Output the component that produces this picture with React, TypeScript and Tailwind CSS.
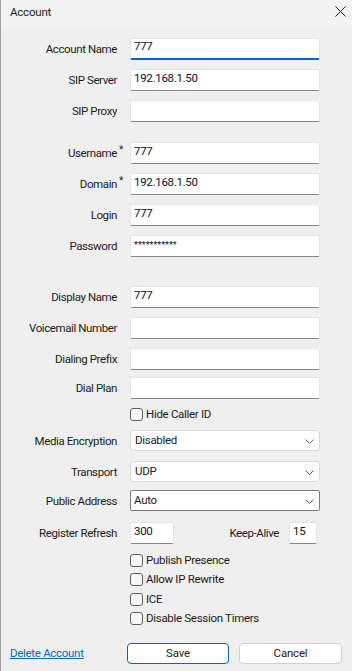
import React from "react";

const font = { fontFamily: 'Roboto, "Liberation Sans", sans-serif' };

function Field({ label, value, star, mt, focused, password }: { label: string; value?: string; star?: boolean; mt: string; focused?: boolean; password?: boolean }) {
  return (
    <div className={`flex items-center ${mt}`}>
      <div className="w-[116px] text-right text-[11.5px] tracking-[-0.4px] text-[#1b1b1b] leading-none pt-[2px]">
        <span className="relative">
          {label}
          {star && <span className="absolute left-full top-[-1px] ml-[2px] text-[10px]">*</span>}
        </span>
      </div>
      <div
        className={`ml-[13px] w-[190px] h-[22px] bg-white rounded-[2px] border border-[#e5e5e5] ${focused ? "border-b-2 border-b-[#0067c0]" : "border-b-[#868686]"} flex items-center pl-[3px] pb-[3px] text-[11.5px] tracking-[-0.3px] text-[#101020]`}
      >
        {password ? <span className="text-[9px] tracking-[0px] pt-[2px]">***********</span> : value}
      </div>
    </div>
  );
}

function Select({ label, value, mt, dark }: { label: string; value: string; mt: string; dark?: boolean }) {
  return (
    <div className={`flex items-center ${mt}`}>
      <div className="w-[116px] text-right text-[11.5px] tracking-[-0.4px] text-[#1b1b1b] leading-none pt-[2px]">{label}</div>
      <div
        className={`ml-[13px] w-[190px] h-[21px] bg-white border ${dark ? "border-[#7a7a7a] rounded-[2px] pl-[3px]" : "border-[#d9d9d9] rounded-[3px] pl-[4px]"} flex items-center justify-between pr-[5px] text-[11.5px] tracking-[-0.3px] text-[#1b1b1b]`}
      >
        <span>{value}</span>
        <svg width="9" height="5" viewBox="0 0 9 5" className="mt-[1px]">
          <path d="M0.5 0.5 L4.5 4.5 L8.5 0.5" fill="none" stroke="#5a5a5a" strokeWidth="1" />
        </svg>
      </div>
    </div>
  );
}

function Check({ label, mt }: { label: string; mt: string }) {
  return (
    <div className={`flex items-center h-[13px] ${mt}`}>
      <div className="ml-[129px] w-[13px] h-[13px] rounded-[3px] border border-[#5f5f5f] bg-[#f6f6f6]" />
      <span className="ml-[3px] pt-[1px] text-[11.5px] tracking-[-0.3px] text-[#1b1b1b] leading-none">{label}</span>
    </div>
  );
}

export default function App() {
  return (
    <div className="w-[352px] h-[671px] overflow-hidden border-l border-[#a3a3a3] bg-[#efefef] flex flex-col" style={font}>
      <div className="h-[27px] bg-[#f3f3f3] flex items-center justify-between pl-[9px] pr-[6px] shrink-0">
        <span className="text-[11.5px] tracking-[-0.2px] text-[#1b1b1b] -mt-[2px]">Account</span>
        <svg width="11" height="11" viewBox="0 0 11 11" className="-mt-[4px]">
          <path d="M0.5 0.5 L10.5 10.5 M10.5 0.5 L0.5 10.5" stroke="#1b1b1b" strokeWidth="1" />
        </svg>
      </div>
      <div className="flex flex-col">
        <Field label="Account Name" value="777" mt="mt-[11px]" focused />
        <Field label="SIP Server" value="192.168.1.50" mt="mt-[9px]" />
        <Field label="SIP Proxy" mt="mt-[9px]" />
        <Field label="Username" value="777" star mt="mt-[20px]" />
        <Field label="Domain" value="192.168.1.50" star mt="mt-[9px]" />
        <Field label="Login" value="777" mt="mt-[9px]" />
        <Field label="Password" password mt="mt-[9px]" />
        <Field label="Display Name" value="777" mt="mt-[29px]" />
        <Field label="Voicemail Number" mt="mt-[9px]" />
        <Field label="Dialing Prefix" mt="mt-[9px]" />
        <Field label="Dial Plan" mt="mt-[7px]" />
        <Check label="Hide Caller ID" mt="mt-[9px]" />
        <Select label="Media Encryption" value="Disabled" mt="mt-[9px]" />
        <Select label="Transport" value="UDP" mt="mt-[10px]" />
        <Select label="Public Address" value="Auto" mt="mt-[8px]" dark />
        <div className="flex items-center mt-[11px]">
          <div className="w-[116px] text-right text-[11.5px] tracking-[-0.4px] text-[#1b1b1b] leading-none pt-[2px]">Register Refresh</div>
          <div className="ml-[13px] w-[44px] h-[22px] bg-white rounded-[2px] border border-[#e5e5e5] border-b-[#868686] flex items-center pl-[3px] pb-[3px] text-[11.5px] tracking-[-0.3px] text-[#101020]">300</div>
          <div className="w-[105px] text-right text-[11.5px] tracking-[-0.4px] text-[#1b1b1b] leading-none pt-[2px]">Keep-Alive</div>
          <div className="ml-[10px] w-[28px] h-[22px] bg-white rounded-[2px] border border-[#e5e5e5] border-b-[#868686] flex items-center pl-[3px] pb-[3px] text-[11.5px] tracking-[-0.3px] text-[#101020]">15</div>
        </div>
        <Check label="Publish Presence" mt="mt-[10px]" />
        <Check label="Allow IP Rewrite" mt="mt-[6px]" />
        <Check label="ICE" mt="mt-[7px]" />
        <Check label="Disable Session Timers" mt="mt-[6px]" />
        <div className="flex items-center mt-[18px]">
          <span className="ml-[9px] w-[117px] text-[11.5px] tracking-[-0.3px] text-[#0a66c8] underline leading-none">Delete Account</span>
          <button className="w-[102px] h-[21px] bg-white border border-[#0067c0] rounded-[4px] text-[11.5px] tracking-[-0.2px] text-[#1b1b1b] leading-none">Save</button>
          <button className="ml-[10px] w-[103px] h-[21px] bg-white border border-[#d0d0d0] rounded-[4px] text-[11.5px] tracking-[-0.2px] text-[#1b1b1b] leading-none">Cancel</button>
        </div>
      </div>
    </div>
  );
}
